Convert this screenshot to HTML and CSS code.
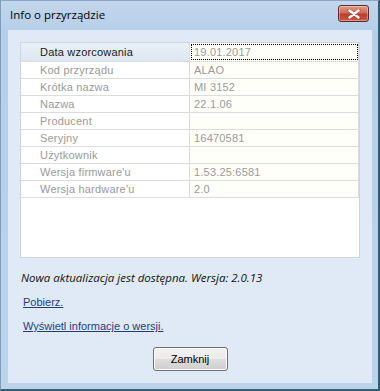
FILE: index.html
```html
<!DOCTYPE html>
<html lang="pl">
<head>
    <meta charset="UTF-8">
    <title>Info o przyrządzie</title>
    <link rel="stylesheet" href="styles.css">
</head>
<body>
    <div class="window">
        <!-- Pasek tytułu -->
        <div class="titlebar">
            <span class="title">Info o przyrządzie</span>
            <button class="close-btn" title="Zamknij">
                <svg width="14" height="10" viewBox="0 0 14 10">
                    <path d="M2 1 L12 9 M12 1 L2 9" stroke="#5a1a1a" stroke-width="3.4" stroke-linecap="round" opacity="0.35"/>
                    <path d="M2.5 1.5 L11.5 8.5 M11.5 1.5 L2.5 8.5" stroke="#fff" stroke-width="2.4" stroke-linecap="round"/>
                </svg>
            </button>
        </div>

        <div class="client">
            <!-- Tabela z danymi -->
            <div class="info-box">
                <div class="grid">
                    <div class="row head">
                        <div class="label">Data wzorcowania</div>
                        <div class="value focused">19.01.2017</div>
                    </div>
                    <div class="row">
                        <div class="label">Kod przyrządu</div>
                        <div class="value">ALAO</div>
                    </div>
                    <div class="row">
                        <div class="label">Krótka nazwa</div>
                        <div class="value">MI 3152</div>
                    </div>
                    <div class="row">
                        <div class="label">Nazwa</div>
                        <div class="value">22.1.06</div>
                    </div>
                    <div class="row">
                        <div class="label">Producent</div>
                        <div class="value"></div>
                    </div>
                    <div class="row">
                        <div class="label">Seryjny</div>
                        <div class="value">16470581</div>
                    </div>
                    <div class="row">
                        <div class="label">Użytkownik</div>
                        <div class="value"></div>
                    </div>
                    <div class="row">
                        <div class="label">Wersja firmware'u</div>
                        <div class="value">1.53.25:6581</div>
                    </div>
                    <div class="row">
                        <div class="label">Wersja hardware'u</div>
                        <div class="value">2.0</div>
                    </div>
                </div>
            </div>

            <p class="update">Nowa aktualizacja jest dostępna. Wersja: 2.0.13</p>
            <a class="link first" href="#">Pobierz.</a>
            <a class="link" href="#">Wyświetl informacje o wersji.</a>

            <div class="actions">
                <button class="btn">Zamknij</button>
            </div>
        </div>
    </div>
</body>
</html>
```

FILE: styles.css
```css
body {
    margin: 0;
    font-family: "Liberation Sans", Arial, sans-serif;
    font-size: 11px;
}

.window {
    width: 380px;
    height: 391px;
    box-sizing: border-box;
    background: linear-gradient(to bottom, #c2d6ec 0px, #b6cfe9 30px, #bcd3ec 100%);
    border-left: 1px solid #7f9db9;
    border-top: 1px solid #8aa6c4;
    border-right: 2px solid #2f5f73;
    border-bottom: 2px solid #2f5f73;
    display: flex;
    flex-direction: column;
}

.titlebar {
    height: 29px;
    display: flex;
    align-items: center;
    justify-content: space-between;
    padding: 0 9px 0 9px;
}

.title {
    font-family: "Open Sans", sans-serif;
    font-size: 11.5px;
    color: #000;
    margin-top: -2px;
}

.close-btn {
    width: 31px;
    height: 17px;
    margin-top: -4px;
    border: 1px solid #5e2a2a;
    border-radius: 3px;
    background: linear-gradient(to bottom, #e39a88 0%, #d26a56 45%, #bb3e2a 55%, #c95a46 100%);
    display: flex;
    align-items: center;
    justify-content: center;
    padding: 0;
    box-shadow: inset 0 0 0 1px rgba(255,255,255,0.35);
}

.client {
    flex: 1;
    margin: 0 6px 6px 7px;
    background: #e0eaf6;
    padding: 12px 12px 0 12px;
    display: flex;
    flex-direction: column;
}

.info-box {
    height: 216px;
    box-sizing: border-box;
    border: 1px solid #cdd6e0;
    background: #fff;
}

.row {
    display: flex;
    height: 17px;
    box-sizing: border-box;
    border-bottom: 1px solid #dcdcdc;
    color: #9a9a9a;
    line-height: 16px;
    letter-spacing: 0.2px;
}

.row.head {
    height: 19px;
    line-height: 18px;
}

.label {
    width: 169px;
    padding-left: 19px;
    box-sizing: border-box;
    border-right: 1px solid #dcdcdc;
}

.head .label {
    color: #1a1a1a;
    background: linear-gradient(to bottom, #e9f0f8, #dde7f2);
}

.value {
    flex: 1;
    padding-left: 4px;
    background: #fffffa;
    border-right: 1px solid #dcdcdc;
}

.value.focused {
    outline: 1px dotted #000;
    outline-offset: -2px;
}

.update {
    margin: 12px 0 0 1px;
    font-family: "Open Sans", sans-serif;
    font-style: italic;
    font-size: 11.5px;
    line-height: 16px;
    color: #111;
}

.link {
    display: block;
    width: max-content;
    margin-left: 3px;
    margin-top: 10px;
    color: #1d3f7f;
    line-height: 14px;
}

.link.first {
    margin-top: 9px;
}

.actions {
    display: flex;
    justify-content: center;
    margin-top: 14px;
}

.btn {
    width: 75px;
    height: 24px;
    border: 1px solid #707070;
    border-radius: 3px;
    background: linear-gradient(to bottom, #f2f2f2 0%, #ebebeb 50%, #dddddd 51%, #cfcfcf 100%);
    box-shadow: inset 0 0 0 1px #fbfbfb;
    font-family: "Liberation Sans", Arial, sans-serif;
    font-size: 11px;
    color: #000;
    padding: 0;
}
```
